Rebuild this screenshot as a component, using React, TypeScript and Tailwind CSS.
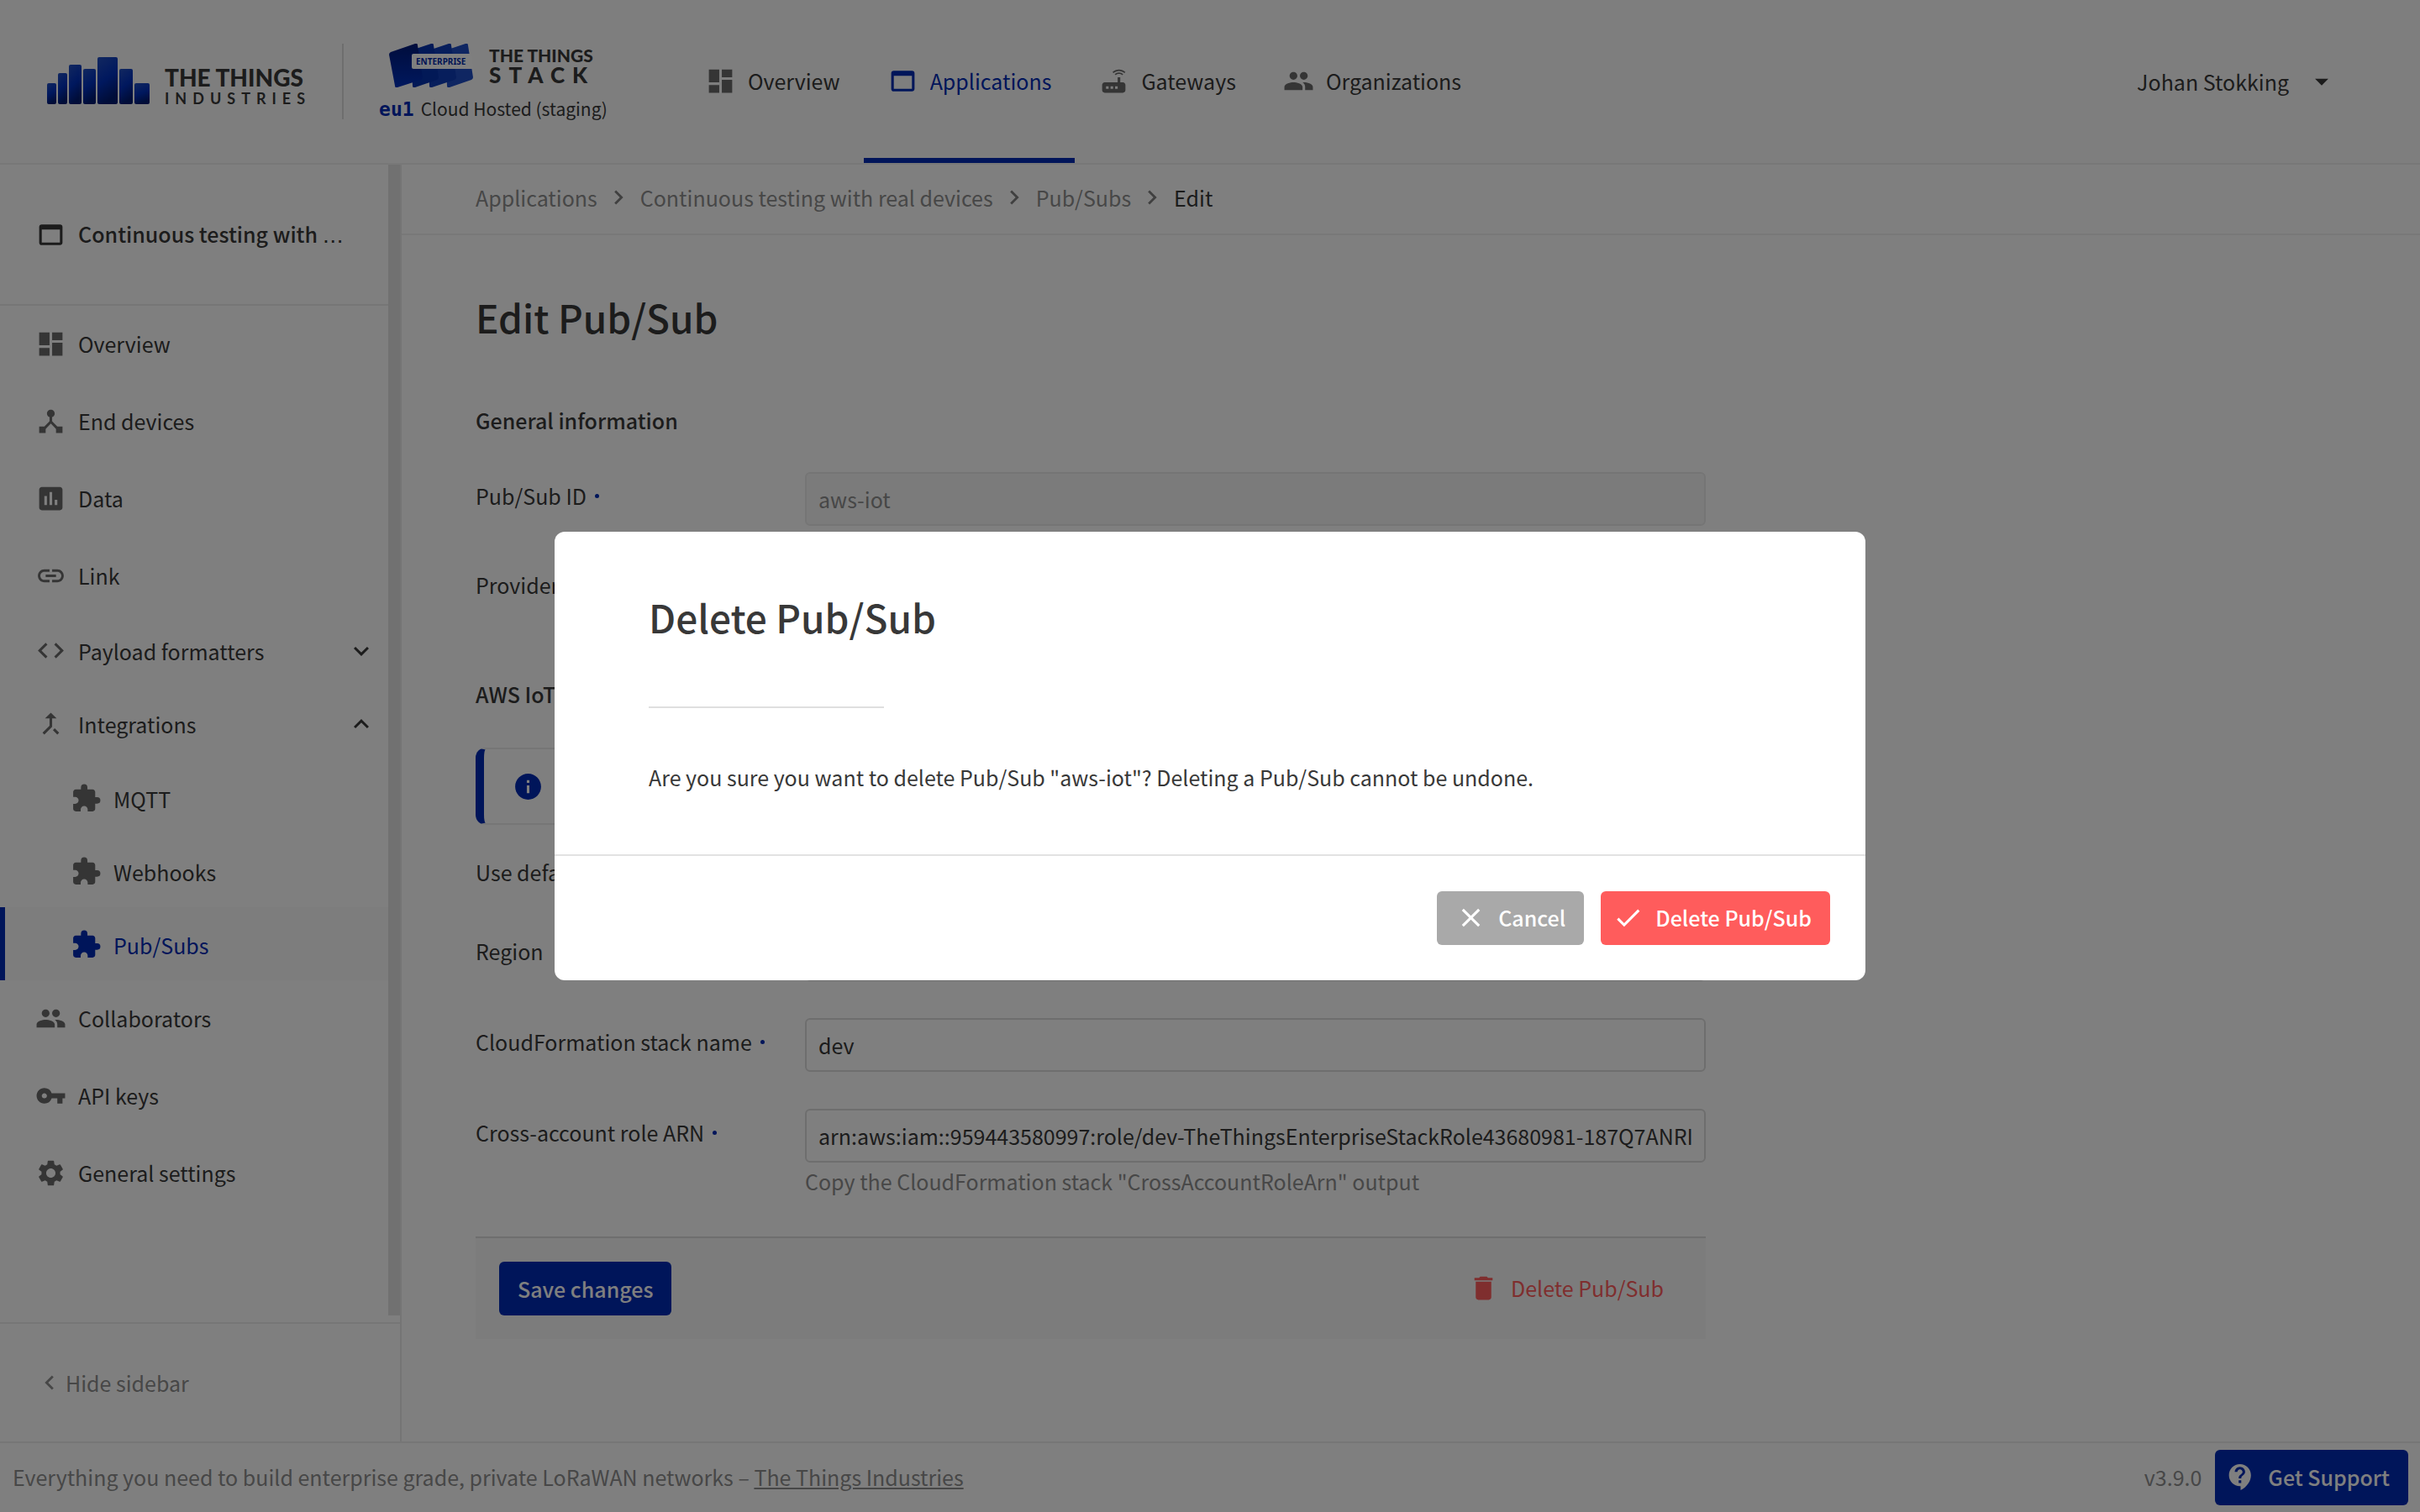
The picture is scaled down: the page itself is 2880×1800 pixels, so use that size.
import type { ReactNode } from 'react'
import type { IconType } from 'react-icons'
import {
  MdArrowDropDown,
  MdCallMerge,
  MdCheck,
  MdClose,
  MdCode,
  MdContactSupport,
  MdDashboard,
  MdDelete,
  MdDeviceHub,
  MdExtension,
  MdInfo,
  MdInsertChart,
  MdKeyboardArrowDown,
  MdKeyboardArrowLeft,
  MdKeyboardArrowRight,
  MdKeyboardArrowUp,
  MdLink,
  MdPeople,
  MdRouter,
  MdSettings,
  MdVpnKey,
  MdWebAsset,
} from 'react-icons/md'

const ICON = 37

function IndustriesLogo() {
  const bars = [
    [0, 31, 11],
    [13, 19, 11],
    [26, 9, 15],
    [43, 14, 15],
    [60, 0, 24],
    [86, 14, 16],
    [104, 31, 18],
  ]
  return (
    <a href="#" className="flex items-end gap-[18px]" aria-label="The Things Industries">
      <svg width="122" height="56" viewBox="0 0 122 56">
        <defs>
          <linearGradient id="bar" x1="0" y1="0" x2="0.3" y2="1">
            <stop offset="0" stopColor="#2450c0" />
            <stop offset="0.55" stopColor="#0030bd" />
            <stop offset="1" stopColor="#001a70" />
          </linearGradient>
        </defs>
        {bars.map(([x, y, w]) => (
          <rect key={x} x={x} y={y} width={w} height={56 - y} rx="2" fill="url(#bar)" />
        ))}
      </svg>
      <span className="flex flex-col font-['Lato'] text-[#383838]">
        <span className="text-[28px] leading-[36px] font-black whitespace-nowrap">THE THINGS</span>
        <span className="text-[18px] leading-[14px] font-bold tracking-[7px]">INDUSTRIES</span>
      </span>
    </a>
  )
}

function StackLogo() {
  return (
    <a href="#" className="flex flex-col items-start" aria-label="The Things Stack">
      <span className="flex items-center gap-[18px] pl-3">
        <svg width="101" height="52" viewBox="0 0 101 52">
          <defs>
            <linearGradient id="card" x1="0" y1="0" x2="0" y2="1">
              <stop offset="0" stopColor="#001a78" />
              <stop offset="1" stopColor="#0030bd" />
            </linearGradient>
          </defs>
          <path d="M67 8 91 0q3 -1 3 2l6 38q0 2-2 3L72 52q-3 1-3-2z" fill="#1f4cc4" />
          <path d="M47 8 71 0q3-1 3 2l6 38q0 2-2 3L51 52q-3 1-3-2z" fill="#0f3cb8" />
          <path d="M26 8 50 0q3-1 3 2l6 38q0 2-2 3L31 52q-3 1-3-2z" fill="#0432ae" />
          <path d="M2 10 31 0q3-1 3 2l6 38q0 2-2 3L10 52q-3 1-3-2L0 13q0-2 2-3z" fill="url(#card)" />
          <path d="M29 12H98l2 18H29q-2 0-2-2V14q0-2 2-2z" fill="#fff" />
          <text x="32" y="25" fontFamily="Noto Sans" fontWeight="700" fontSize="10" fill="#0027a8">
            ENTERPRISE
          </text>
        </svg>
        <span className="flex flex-col font-['Lato'] font-black text-[#383838]">
          <span className="text-[21px] leading-[22px] whitespace-nowrap">THE THINGS</span>
          <span className="text-[26px] leading-[24px] tracking-[9px]">STACK</span>
        </span>
      </span>
      <span className="flex items-baseline gap-2 leading-[50px] whitespace-nowrap">
        <span className="font-['DejaVu_Sans_Mono'] text-[23px] font-bold text-[#002bb4]">eu1</span>
        <span className="text-[21px]">Cloud Hosted (staging)</span>
      </span>
    </a>
  )
}

function NavTab({ icon: Icon, label, active }: { icon: IconType; label: string; active?: boolean }) {
  return (
    <a
      href="#"
      className={
        active
          ? 'flex items-center gap-[14px] border-b-[6px] border-[#002bb4] px-7 pt-1 text-[#002bb4]'
          : 'flex items-center gap-[14px] border-b-[6px] border-transparent px-7 pt-1'
      }
    >
      <Icon size={ICON} className={active ? 'text-[#002bb4]' : 'text-[#6b6b6b]'} />
      {label}
    </a>
  )
}

function SideItem({ icon: Icon, label }: { icon: IconType; label: string }) {
  return (
    <a href="#" className="flex h-[92px] items-center gap-[14px] pb-[2px] pl-[42px]">
      <Icon size={ICON} className="text-[#6b6b6b]" />
      {label}
    </a>
  )
}

function SideGroup({ icon: Icon, label, open }: { icon: IconType; label: string; open?: boolean }) {
  const Arrow = open ? MdKeyboardArrowUp : MdKeyboardArrowDown
  return (
    <button
      type="button"
      aria-expanded={!!open}
      className="flex h-[87px] w-full items-center gap-[14px] pr-[14px] pb-[2px] pl-[42px] text-left"
    >
      <Icon size={ICON} className="text-[#6b6b6b]" />
      <span className="grow">{label}</span>
      <Arrow size={36} />
    </button>
  )
}

function SubItem({ label, active }: { label: string; active?: boolean }) {
  return (
    <a
      href="#"
      className={
        active
          ? 'flex h-[87px] items-center gap-[14px] border-l-[6px] border-[#002bb4] bg-[#fafafa] pt-[2px] pl-[78px] text-[#002bb4]'
          : 'flex h-[87px] items-center gap-[14px] border-l-[6px] border-transparent pt-[2px] pl-[78px]'
      }
    >
      <MdExtension size={ICON} className={active ? 'text-[#002bb4]' : 'text-[#6b6b6b]'} />
      {label}
    </a>
  )
}

function Row({
  id,
  label,
  required,
  className,
  children,
}: {
  id: string
  label: string
  required?: boolean
  className: string
  children: ReactNode
}) {
  return (
    <div className={`flex items-start ${className}`}>
      <label htmlFor={id} className="flex w-[392px] shrink-0 items-center gap-[10px] pt-2 whitespace-nowrap">
        {label}
        {required && <span className="size-[5px] rounded-full bg-[#002bb4]" />}
      </label>
      <div className="min-w-0 grow">{children}</div>
    </div>
  )
}

const inputClass = 'block h-16 w-full rounded-md border-2 border-[#dcdcdc] bg-white px-[14px]'

function Crumb({ label }: { label: string }) {
  return (
    <>
      <a href="#" className="text-[#8e8e8e]">
        {label}
      </a>
      <MdKeyboardArrowRight size={34} className="mr-[9px] ml-2 text-[#808080]" />
    </>
  )
}

export default function App() {
  return (
    <div className="flex min-h-screen flex-col bg-white font-['Noto_Sans_CJK_KR',sans-serif] text-[25px] leading-[40px] text-[#383838]">
      <header className="flex h-[196px] items-stretch border-b-2 border-[#f0f0f0] bg-[#fdfdfd]">
        <div className="flex items-start pt-[52px] pl-14">
          <div className="pt-4">
            <IndustriesLogo />
          </div>
          <div className="mr-[42px] ml-[37px] h-[90px] w-[2px] bg-[#dddddd]" />
          <StackLogo />
        </div>
        <nav className="ml-[88px] flex items-stretch">
          <NavTab icon={MdDashboard} label="Overview" />
          <NavTab icon={MdWebAsset} label="Applications" active />
          <NavTab icon={MdRouter} label="Gateways" />
          <NavTab icon={MdPeople} label="Organizations" />
        </nav>
        <button type="button" className="mr-[98px] ml-auto flex items-center gap-5">
          Johan Stokking
          <MdArrowDropDown size={38} />
        </button>
      </header>

      <div className="flex grow">
        <aside className="flex w-[478px] shrink-0 flex-col border-r-2 border-[#ebebeb]">
          <div className="mb-2 grow border-r-[14px] border-[#e2e2e2]">
            <div className="flex h-[168px] items-center gap-[14px] border-b-2 border-[#ececec] pl-[42px]">
              <MdWebAsset size={ICON} className="shrink-0" />
              <span className="font-medium whitespace-nowrap">
                Continuous testing with <span className="font-['DejaVu_Sans']">…</span>
              </span>
            </div>
            <nav>
              <SideItem icon={MdDashboard} label="Overview" />
              <SideItem icon={MdDeviceHub} label="End devices" />
              <SideItem icon={MdInsertChart} label="Data" />
              <SideItem icon={MdLink} label="Link" />
              <SideGroup icon={MdCode} label="Payload formatters" />
              <SideGroup icon={MdCallMerge} label="Integrations" open />
              <SubItem label="MQTT" />
              <SubItem label="Webhooks" />
              <SubItem label="Pub/Subs" active />
              <SideItem icon={MdPeople} label="Collaborators" />
              <SideItem icon={MdVpnKey} label="API keys" />
              <SideItem icon={MdSettings} label="General settings" />
            </nav>
          </div>
          <button
            type="button"
            className="flex h-[142px] items-center gap-[2px] border-t-2 border-[#ececec] pl-[42px] text-[#8e8e8e]"
          >
            <MdKeyboardArrowLeft size={34} />
            Hide sidebar
          </button>
        </aside>

        <main className="min-w-0 grow">
          <nav className="flex h-[84px] items-center border-b-2 border-[#f0f0f0] pb-1 pl-[88px]">
            <Crumb label="Applications" />
            <Crumb label="Continuous testing with real devices" />
            <Crumb label="Pub/Subs" />
            <span>Edit</span>
          </nav>
          <form className="ml-[88px] max-w-[1464px]">
            <h1 className="pt-[67px] text-[46px] leading-[60px] font-medium">Edit Pub/Sub</h1>
            <h2 className="mt-[73px] font-medium">General information</h2>
            <Row id="pubsub-id" label="Pub/Sub ID" required className="mt-[42px] h-16">
              <input
                id="pubsub-id"
                disabled
                defaultValue="aws-iot"
                className="block h-16 w-full rounded-md border-2 border-[#ebebeb] bg-[#f7f7f7] px-[14px] text-[#8e8e8e]"
              />
            </Row>
            <Row id="provider" label="Provider" className="mt-[42px] h-[92px]">
              <input id="provider" type="radio" defaultChecked className="mt-3 size-7" />
            </Row>
            <h2 className="mt-[46px] font-medium">AWS IoT</h2>
            <div className="mt-11 flex h-[92px] items-center rounded-xl border-2 border-l-[10px] border-[#ececec] border-l-[#002bb4] pl-[34px]">
              <MdInfo size={ICON} className="text-[#002bb4]" />
            </div>
            <Row id="use-default" label="Use default" className="mt-7 h-[50px]">
              <input id="use-default" type="checkbox" className="mt-3 size-7" />
            </Row>
            <Row id="region" label="Region" className="mt-11">
              <select id="region" className={inputClass} />
            </Row>
            <Row id="stack-name" label="CloudFormation stack name" required className="mt-11">
              <input id="stack-name" defaultValue="dev" className={inputClass} />
            </Row>
            <Row id="role-arn" label="Cross-account role ARN" required className="mt-11">
              <input
                id="role-arn"
                defaultValue="arn:aws:iam::959443580997:role/dev-TheThingsEnterpriseStackRole43680981-187Q7ANRI"
                className={inputClass}
              />
              <p className="pt-[2px] text-[#8e8e8e]">Copy the CloudFormation stack "CrossAccountRoleArn" output</p>
            </Row>
            <div className="mt-[46px] flex items-center justify-between border-t-2 border-[#dcdcdc] bg-[#f8f8f8] px-7 py-7">
              <button type="submit" className="h-16 rounded-md bg-[#002bb4] px-[22px] font-medium text-white">
                Save changes
              </button>
              <button type="button" className="flex items-center gap-[14px] px-[22px] pb-[2px] text-[#ff5c5c]">
                <MdDelete size={ICON} />
                Delete Pub/Sub
              </button>
            </div>
          </form>
        </main>
      </div>

      <footer className="flex h-[84px] items-center border-t-2 border-[#ececec] pr-[14px] pl-[15px] text-[#8e8e8e]">
        <p className="pb-[2px]">
          Everything you need to build enterprise grade, private LoRaWAN networks –{' '}
          <a href="#" className="underline">
            The Things Industries
          </a>
        </p>
        <span className="mr-4 ml-auto pb-[2px]">v3.9.0</span>
        <button
          type="button"
          className="flex h-[66px] items-center gap-[14px] rounded-md bg-[#002bb4] pr-[22px] pb-[2px] pl-3 font-medium text-white"
        >
          <MdContactSupport size={ICON} />
          Get Support
        </button>
      </footer>

      <div className="fixed inset-0 flex items-center justify-center bg-black/50">
        <div role="dialog" aria-modal="true" aria-labelledby="dialog-title" className="w-[1560px] rounded-xl bg-white">
          <div className="px-28 pt-[71px] pb-[72px]">
            <h2 id="dialog-title" className="text-[46px] leading-[60px] font-medium">
              Delete Pub/Sub
            </h2>
            <div className="mt-[77px] h-[2px] w-[280px] bg-[#dfdfdf]" />
            <p className="mt-[62px]">
              Are you sure you want to delete Pub/Sub "aws-iot"? Deleting a Pub/Sub cannot be undone.
            </p>
          </div>
          <div className="flex justify-end gap-5 border-t-2 border-[#e2e2e2] p-[42px]">
            <button
              type="button"
              className="flex h-16 items-center gap-[14px] rounded-md bg-[#a9a9a9] px-[22px] pb-[2px] font-medium text-white"
            >
              <MdClose size={ICON} />
              Cancel
            </button>
            <button
              type="button"
              className="flex h-16 items-center gap-[14px] rounded-md bg-[#ff5c5c] pr-[22px] pb-[2px] pl-[14px] font-medium text-white"
            >
              <MdCheck size={ICON} />
              Delete Pub/Sub
            </button>
          </div>
        </div>
      </div>
    </div>
  )
}
